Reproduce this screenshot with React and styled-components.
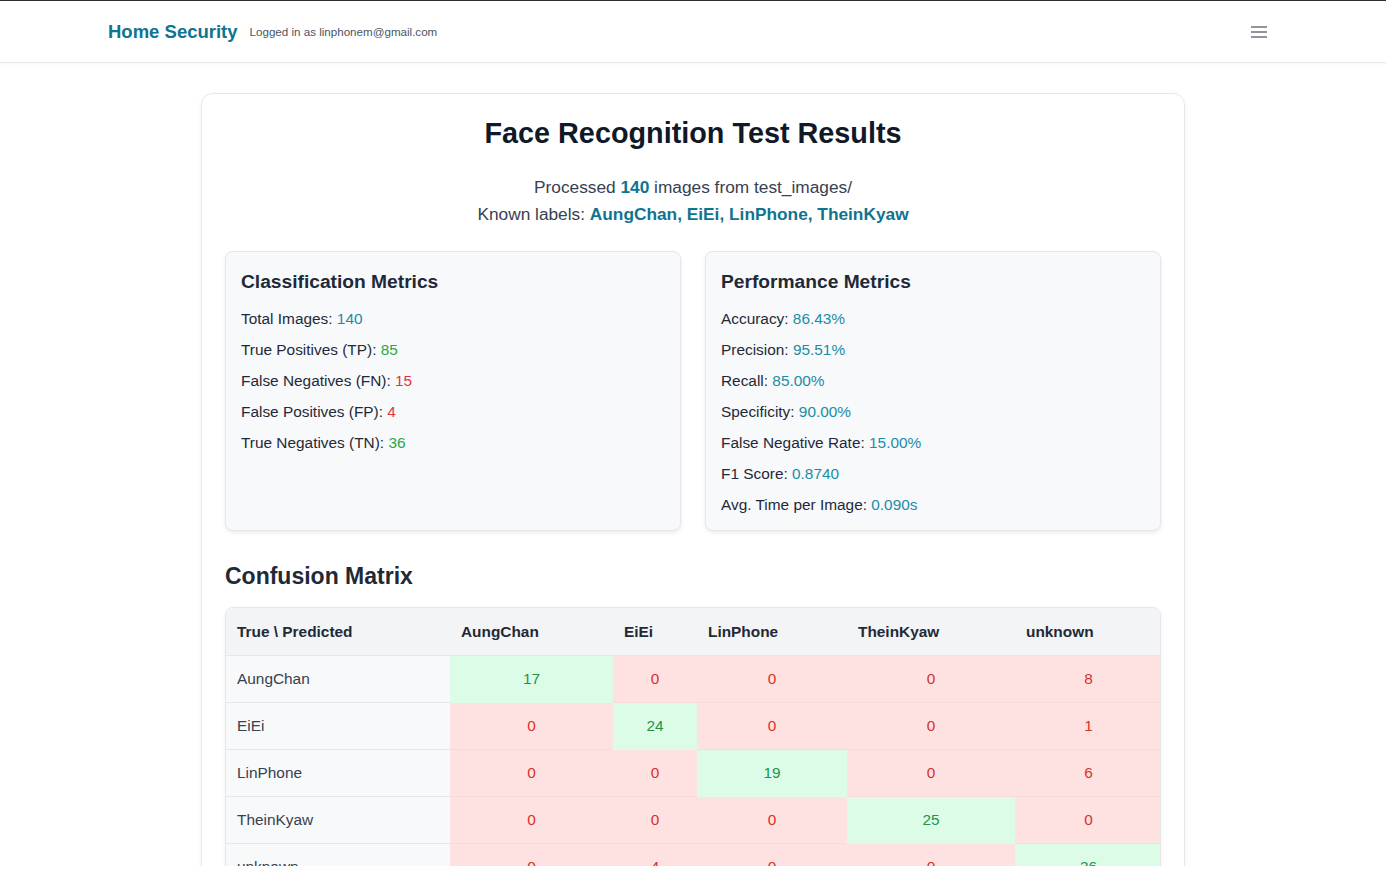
import React from 'react';
import styled, { createGlobalStyle } from 'styled-components';

const GlobalStyle = createGlobalStyle`
  body {
    margin: 0;
    background: #fff;
    font-family: "Liberation Sans", Arial, sans-serif;
    color: #1f2937;
  }
`;

const Frame = styled.div`
  width: 1386px;
  height: 866px;
  overflow: hidden;
  border-top: 1px solid #2d2d2d;
  box-sizing: border-box;
`;

const NavBar = styled.header`
  height: 61px;
  border-bottom: 1px solid #e5e7eb;
  box-shadow: 0 1px 2px rgba(0, 0, 0, 0.04);
`;

const NavInner = styled.div`
  width: 1170px;
  margin: 0 auto;
  height: 100%;
  display: flex;
  align-items: center;
  justify-content: space-between;
`;

const Brand = styled.div`
  display: flex;
  align-items: center;
  gap: 12px;
`;

const BrandName = styled.span`
  font-size: 18.5px;
  font-weight: bold;
  color: #0e7490;
`;

const LoggedIn = styled.span`
  font-size: 11.6px;
  color: #4b5563;
`;

const MenuButton = styled.button`
  border: 0;
  background: transparent;
  padding: 0;
  margin-right: 11px;
  display: flex;
  color: #6b7280;
`;

const Card = styled.main`
  width: 984px;
  box-sizing: border-box;
  margin: 30px auto 0;
  padding: 22px 23px 24px;
  border: 1px solid #e5e7eb;
  border-radius: 12px;
  box-shadow: 0 2px 6px rgba(0, 0, 0, 0.05);
`;

const Title = styled.h1`
  margin: 0 0 24px;
  text-align: center;
  font-size: 28.8px;
  line-height: 34px;
  color: #111827;
`;

const Summary = styled.p`
  margin: 0 0 23px;
  text-align: center;
  font-size: 17.3px;
  line-height: 27px;
  color: #374151;
`;

const Strong = styled.b`
  color: #0e7490;
`;

const MetricsGrid = styled.div`
  display: grid;
  grid-template-columns: 1fr 1fr;
  gap: 24px;
`;

const MetricCard = styled.section`
  background: #f8f9fb;
  border: 1px solid #e5e7eb;
  border-radius: 8px;
  box-shadow: 0 2px 4px rgba(0, 0, 0, 0.08);
  padding: 17px 15px 16px;
  min-height: 278px;
  box-sizing: border-box;
`;

const MetricTitle = styled.h3`
  margin: 0 0 14px;
  font-size: 19.2px;
  line-height: 26px;
  color: #1f2937;
`;

const MetricRow = styled.div`
  font-size: 15.4px;
  line-height: 19px;
  margin-bottom: 12px;
  color: #1f2937;

  &:last-child {
    margin-bottom: 0;
  }
`;

const tones = {
  info: '#1b8ca6',
  good: '#28a745',
  bad: '#dc3545',
};

const Value = styled.span`
  color: ${({ tone }) => tones[tone]};
`;

const SectionTitle = styled.h2`
  margin: 31px 0 17px;
  font-size: 23px;
  line-height: 28px;
  color: #1f2937;
`;

const TableWrap = styled.div`
  border: 1px solid #e5e7eb;
  border-radius: 8px;
  overflow: hidden;
  box-shadow: 0 2px 4px rgba(0, 0, 0, 0.06);
`;

const Table = styled.table`
  width: 100%;
  border-collapse: collapse;
  table-layout: fixed;
  font-size: 15.4px;
  line-height: 19px;

  th,
  td {
    box-sizing: border-box;
    height: 47px;
    padding-top: 0;
    padding-bottom: 0;
  }
`;

const Th = styled.th`
  background: #f3f4f6;
  padding: 0 11px;
  text-align: left;
  font-weight: bold;
  color: #1f2937;
  border-bottom: 1px solid #e5e7eb;
`;

const RowHead = styled.td`
  background: #f8f9fb;
  padding: 0 11px;
  color: #374151;
  border-bottom: 1px solid #e5e7eb;
`;

const Cell = styled.td`
  text-align: center;
  background: ${({ hit }) => (hit ? '#dcfce7' : '#fee2e2')};
  color: ${({ hit }) => (hit ? '#1f9448' : '#d9302c')};
  border-bottom: 1px solid ${({ hit }) => (hit ? '#dcfce7' : '#f8dada')};
`;

const labels = ['AungChan', 'EiEi', 'LinPhone', 'TheinKyaw', 'unknown'];
const widths = [224, 163, 84, 150, 168, 147];

const matrix = [
  [17, 0, 0, 0, 8],
  [0, 24, 0, 0, 1],
  [0, 0, 19, 0, 6],
  [0, 0, 0, 25, 0],
  [0, 4, 0, 0, 36],
];

const classification = [
  ['Total Images', '140', 'info'],
  ['True Positives (TP)', '85', 'good'],
  ['False Negatives (FN)', '15', 'bad'],
  ['False Positives (FP)', '4', 'bad'],
  ['True Negatives (TN)', '36', 'good'],
];

const performance = [
  ['Accuracy', '86.43%'],
  ['Precision', '95.51%'],
  ['Recall', '85.00%'],
  ['Specificity', '90.00%'],
  ['False Negative Rate', '15.00%'],
  ['F1 Score', '0.8740'],
  ['Avg. Time per Image', '0.090s'],
];

const App = () => (
  <Frame>
    <GlobalStyle />
    <NavBar>
      <NavInner>
        <Brand>
          <BrandName>Home Security</BrandName>
          <LoggedIn>Logged in as linphonem@gmail.com</LoggedIn>
        </Brand>
        <MenuButton aria-label="menu">
          <svg width="16" height="12" viewBox="0 0 16 12">
            <path d="M0 1h16M0 6h16M0 11h16" stroke="currentColor" strokeWidth="1.6" />
          </svg>
        </MenuButton>
      </NavInner>
    </NavBar>

    <Card>
      <Title>Face Recognition Test Results</Title>
      <Summary>
        Processed <Strong>140</Strong> images from test_images/
        <br />
        Known labels: <Strong>AungChan, EiEi, LinPhone, TheinKyaw</Strong>
      </Summary>

      <MetricsGrid>
        <MetricCard>
          <MetricTitle>Classification Metrics</MetricTitle>
          {classification.map(([label, value, tone]) => (
            <MetricRow key={label}>
              {label}: <Value tone={tone}>{value}</Value>
            </MetricRow>
          ))}
        </MetricCard>
        <MetricCard>
          <MetricTitle>Performance Metrics</MetricTitle>
          {performance.map(([label, value]) => (
            <MetricRow key={label}>
              {label}: <Value tone="info">{value}</Value>
            </MetricRow>
          ))}
        </MetricCard>
      </MetricsGrid>

      <SectionTitle>Confusion Matrix</SectionTitle>
      <TableWrap>
        <Table>
          <colgroup>
            {widths.map((w, i) => (
              <col key={i} style={{ width: w }} />
            ))}
          </colgroup>
          <thead>
            <tr>
              <Th>True \ Predicted</Th>
              {labels.map((l) => (
                <Th key={l}>{l}</Th>
              ))}
            </tr>
          </thead>
          <tbody>
            {matrix.map((row, r) => (
              <tr key={labels[r]}>
                <RowHead>{labels[r]}</RowHead>
                {row.map((n, c) => (
                  <Cell key={c} hit={r === c}>
                    {n}
                  </Cell>
                ))}
              </tr>
            ))}
          </tbody>
        </Table>
      </TableWrap>
    </Card>
  </Frame>
);

export default App;
